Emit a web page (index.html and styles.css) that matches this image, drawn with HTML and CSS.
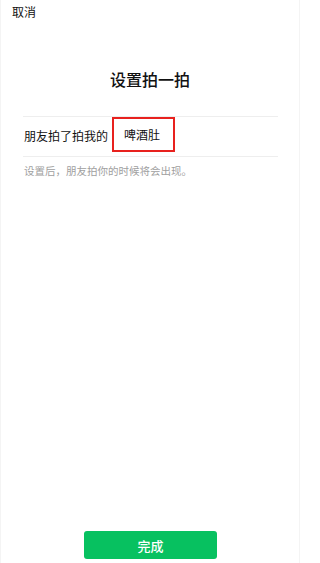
FILE: index.html
```html
<!DOCTYPE html>
<html lang="zh-CN">
<head>
<meta charset="utf-8">
<title>设置拍一拍</title>
<link rel="stylesheet" href="styles.css">
</head>
<body>
<div class="page">
  <div class="cancel">取消</div>
  <h1 class="title">设置拍一拍</h1>
  <div class="row">
    <span class="label">朋友拍了拍我的</span>
    <span class="value">啤酒肚</span>
  </div>
  <p class="hint">设置后，朋友拍你的时候将会出现。</p>
  <div class="footer">
    <button class="done">完成</button>
  </div>
</div>
</body>
</html>
```

FILE: styles.css
```css
html, body {
  margin: 0;
  padding: 0;
  background: #fff;
}
body {
  font-family: "Noto Sans CJK SC", "Noto Sans", sans-serif;
  color: #111;
}
.page {
  box-sizing: border-box;
  width: 300px;
  height: 563px;
  display: flex;
  flex-direction: column;
  border-left: 1px solid #f4f4f4;
  border-right: 1px solid #f4f4f4;
}
.cancel {
  font-size: 12px;
  line-height: 14px;
  padding: 5px 0 0 11px;
  color: #111;
}
.title {
  margin: 50px 0 0;
  font-size: 16px;
  line-height: 20px;
  font-weight: 500;
  text-align: center;
  color: #111;
}
.row {
  display: flex;
  align-items: flex-start;
  margin: 27px 21px 0 22px;
  height: 39px;
  border-top: 1px solid #eeeeee;
  border-bottom: 1px solid #eeeeee;
}
.label {
  font-size: 12px;
  line-height: 38px;
  color: #111;
  margin-left: 1px;
}
.value {
  box-sizing: border-box;
  margin-left: 4px;
  width: 63px;
  height: 35px;
  border: 2px solid #e8211e;
  font-size: 12px;
  line-height: 31px;
  padding-left: 10px;
  color: #111;
}
.hint {
  margin: 7px 0 0 23px;
  font-size: 10.5px;
  line-height: 14px;
  color: #a0a0a0;
}
.footer {
  margin-top: auto;
  display: flex;
  justify-content: center;
  padding-bottom: 4px;
}
.done {
  width: 133px;
  height: 28px;
  border: none;
  border-radius: 3px;
  background: #07c160;
  color: #fff;
  font-family: "Noto Sans CJK SC", "Noto Sans", sans-serif;
  font-size: 13px;
  font-weight: 500;
  padding: 0;
  margin-left: 1px;
}
```
